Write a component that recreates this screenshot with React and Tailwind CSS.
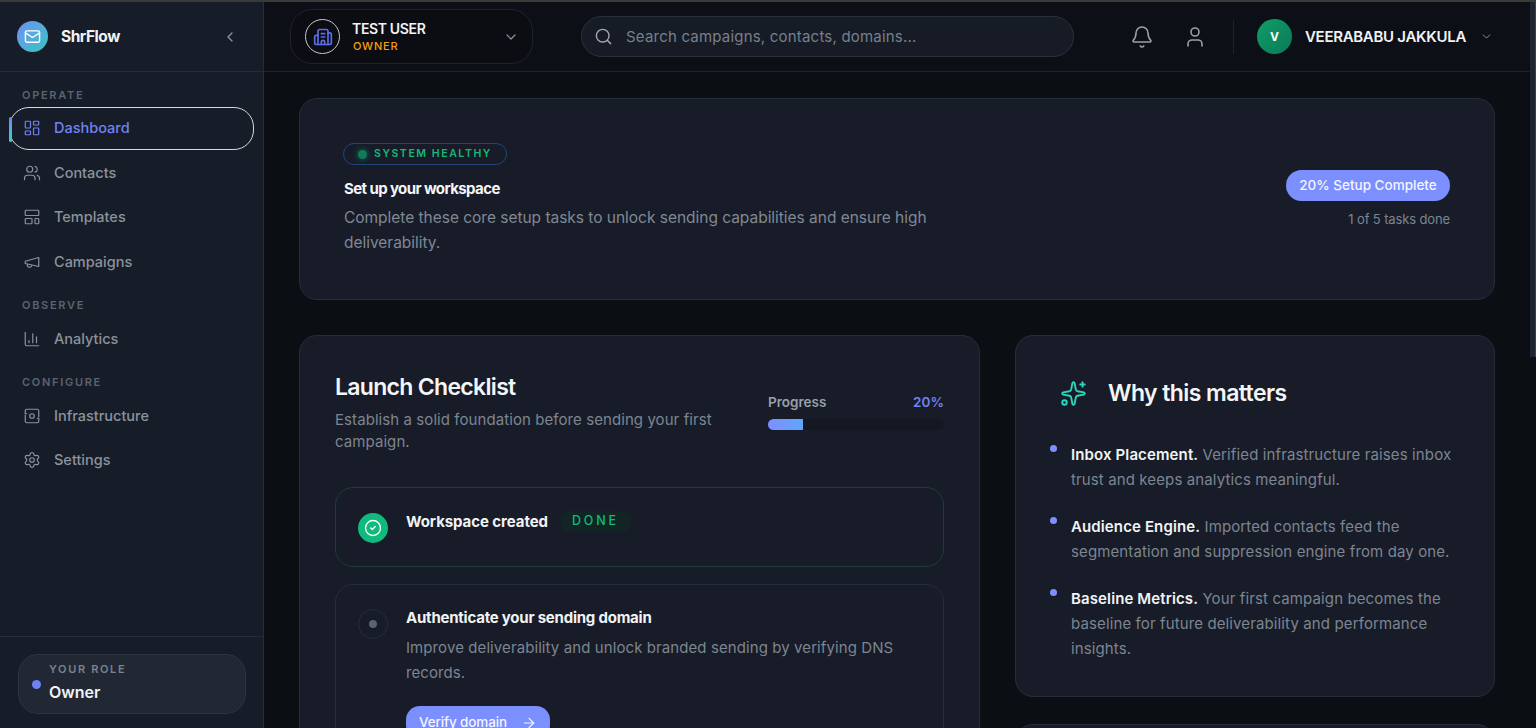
import React from "react";
import { Mail, ChevronLeft, ChevronDown, Building2, Search, Bell, User, LayoutDashboard, Users, LayoutTemplate, ChartColumn, Settings, Sparkles, CircleCheck, ArrowRight } from "lucide-react";

function InfraIcon({ className, strokeWidth = 1.6 }) {
  return (
    <svg viewBox="0 0 24 24" fill="none" stroke="currentColor" strokeWidth={strokeWidth} strokeLinecap="round" strokeLinejoin="round" className={className}>
      <path d="M3 9V5a2 2 0 0 1 2-2h14a2 2 0 0 1 2 2v8" />
      <path d="M21 15v4a2 2 0 0 1-2 2H5a2 2 0 0 1-2-2v-8" />
      <path d="M3 9h2M19 15h2" />
      <circle cx="12" cy="12" r="3" />
    </svg>
  );
}

function HornIcon({ className, strokeWidth = 1.6 }) {
  return (
    <svg viewBox="0 0 24 24" fill="none" stroke="currentColor" strokeWidth={strokeWidth} strokeLinecap="round" strokeLinejoin="round" className={className}>
      <path d="m3 11 18-5v12L3 14v-3z" />
      <path d="M11.6 16.8a3 3 0 1 1-5.8-1.6" />
    </svg>
  );
}

function SectionLabel({ children, className = "" }) {
  return <div className={`pl-[22px] text-[11px] font-semibold tracking-[0.155em] leading-[14px] text-[#5b6370] ${className}`}>{children}</div>;
}

function NavItem({ icon: Icon, label, active }) {
  return (
    <div className={`relative mx-[9px] flex h-[42.5px] items-center gap-[13.5px] rounded-[20px] border pl-[12.5px] text-[14.5px] font-medium ${active ? "border-[#d5d8dc] text-[#7083f0]" : "border-transparent text-[#8b929d]"}`}>
      {active && <span className="absolute left-[-1px] top-[9px] h-[25px] w-[3px] rounded-full bg-gradient-to-b from-[#6c82f5] to-[#2dd4bf]" />}
      <Icon className="h-[18px] w-[18px] shrink-0" strokeWidth={1.6} />
      <span>{label}</span>
    </div>
  );
}

function Sidebar() {
  return (
    <aside className="flex h-full w-[264px] shrink-0 flex-col border-r border-[#262d3a] bg-[#171d28]">
      <div className="flex h-[70px] shrink-0 items-center border-b border-[#262d3a] pl-[17px] pr-[25px]">
        <div className="flex h-[31px] w-[31px] items-center justify-center rounded-full bg-gradient-to-br from-[#6c8cf5] to-[#2dc5c0]">
          <Mail className="h-[17px] w-[17px] text-white" strokeWidth={2} />
        </div>
        <span className="ml-[13px] text-[15.5px] font-bold tracking-[-0.03em] text-[#f1f3f5]">ShrFlow</span>
        <ChevronLeft className="ml-auto h-4 w-4 text-[#8b929d]" strokeWidth={2} />
      </div>
      <nav className="flex-1 pt-[16px]">
        <SectionLabel className="mb-[5px]">OPERATE</SectionLabel>
        <div className="flex flex-col gap-[2px]">
          <NavItem icon={LayoutDashboard} label="Dashboard" active />
          <NavItem icon={Users} label="Contacts" />
          <NavItem icon={LayoutTemplate} label="Templates" />
          <NavItem icon={HornIcon} label="Campaigns" />
        </div>
        <SectionLabel className="mb-[6px] mt-[15px]">OBSERVE</SectionLabel>
        <NavItem icon={ChartColumn} label="Analytics" />
        <SectionLabel className="mb-[6px] mt-[14px]">CONFIGURE</SectionLabel>
        <div className="flex flex-col gap-[2px]">
          <NavItem icon={InfraIcon} label="Infrastructure" />
          <NavItem icon={Settings} label="Settings" />
        </div>
      </nav>
      <div className="shrink-0 border-t border-[#262d3a] px-[18px] pb-[14px] pt-[17px]">
        <div className="flex h-[60px] w-[228px] items-center gap-[8px] rounded-[20px] border border-[#2c3441] bg-[#212834] pl-[13px]">
          <span className="h-[9px] w-[9px] rounded-full bg-[#6c82f5]" />
          <div className="mb-[5px]">
            <div className="text-[11px] font-semibold leading-[16px] tracking-[0.15em] text-[#7a818d]">YOUR ROLE</div>
            <div className="mt-[5px] text-[16px] font-semibold leading-[20px] text-[#f1f3f5]">Owner</div>
          </div>
        </div>
      </div>
    </aside>
  );
}

function Header() {
  return (
    <header className="flex h-[70px] shrink-0 items-center border-b border-[#1c212b] bg-[#0c0f15] pl-[26px]">
      <div className="flex h-[55px] w-[243px] shrink-0 items-center rounded-[22px] border border-[#1e232e] bg-[#0b0d13] pl-[14px]">
        <div className="flex h-[35px] w-[35px] items-center justify-center rounded-full border border-[#c4c8cd]">
          <Building2 className="h-[20px] w-[20px] text-[#5b6ee8]" strokeWidth={2} />
        </div>
        <div className="ml-[12px] mt-[2px]">
          <div className="text-[14px] font-semibold leading-[18px] tracking-[-0.025em] text-[#f1f3f5]">TEST USER</div>
          <div className="ml-px text-[11px] font-medium leading-[17px] tracking-[0.07em] text-[#f59e0b]">OWNER</div>
        </div>
        <ChevronDown className="ml-auto mr-[13px] h-4 w-4 text-[#8b929d]" strokeWidth={1.8} />
      </div>
      <div className="ml-[48px] flex h-[41px] w-[493px] shrink-0 items-center rounded-full border border-[#2a313e] bg-[#161b25] pl-[12px]">
        <Search className="h-[19px] w-[19px] text-[#a1a7b0]" strokeWidth={1.8} />
        <span className="ml-[13px] mt-[2px] text-[15px] tracking-[0.2px] text-[#76808e]">Search campaigns, contacts, domains...</span>
      </div>
      <Bell className="ml-[56px] h-6 w-6 text-[#9aa0a9]" strokeWidth={1.6} />
      <User className="ml-[29px] h-6 w-6 text-[#9aa0a9]" strokeWidth={1.6} />
      <div className="ml-[26px] h-[35px] w-px bg-[#1c212b]" />
      <div className="ml-[23px] flex h-[35px] w-[35px] items-center justify-center rounded-full bg-gradient-to-br from-[#0f9d6a] to-[#0b7a55] text-[12px] font-bold text-white">V</div>
      <span className="ml-[13px] mt-[2px] text-[15px] font-semibold tracking-[-0.02em] text-[#f1f3f5]">VEERABABU JAKKULA</span>
      <ChevronDown className="ml-[14px] h-[13px] w-[13px] text-[#8b929d]" strokeWidth={1.8} />
    </header>
  );
}

function Hero() {
  return (
    <section className="flex h-[202px] items-center justify-between rounded-[18px] border border-[#262d3a] bg-[#171c28] px-[44px]">
      <div className="w-[600px]">
        <div className="-ml-px flex h-[22px] w-[164px] items-center gap-[7px] rounded-full border border-[#21457c] pl-[14px]">
          <span className="h-[9px] w-[9px] rounded-full bg-[#137a57] shadow-[0_0_6px_#137a57]" />
          <span className="text-[10.5px] font-semibold tracking-[0.15em] text-[#17b877]">SYSTEM HEALTHY</span>
        </div>
        <h2 className="mt-[13px] text-[15px] font-bold leading-[22px] tracking-[-0.04em] text-[#f4f5f7]">Set up your workspace</h2>
        <p className="mt-[5px] text-[15.5px] leading-[25px] tracking-[-0.025px] text-[#808894]">Complete these core setup tasks to unlock sending capabilities and ensure high deliverability.</p>
      </div>
      <div className="flex flex-col items-end">
        <div className="flex h-[31px] w-[164px] items-center justify-center rounded-full bg-[#7c8fff] text-[13.5px] font-medium text-[#f4f5ff]">20% Setup Complete</div>
        <div className="mt-[9px] text-[13px] leading-[18px] tracking-[-0.01em] text-[#7d8591]">1 of 5 tasks done</div>
      </div>
    </section>
  );
}

function ChecklistPending({ title, desc, action }) {
  return (
    <div className="flex gap-[18px] rounded-[18px] border border-[#262d3a] px-[22px] py-[24px]">
      <div className="flex h-[30px] w-[30px] shrink-0 items-center justify-center rounded-full border border-[#262d3a]">
        <span className="h-[8px] w-[8px] rounded-full bg-[#5b6370]" />
      </div>
      <div className="-mt-px">
        <div className="text-[15px] font-bold leading-[20px] tracking-[-0.015em] text-[#f1f3f5]">{title}</div>
        <p className="mt-[7px] text-[15px] leading-[25px] tracking-[0.006em] text-[#7d8591]">{desc}</p>
        {action && (
          <div className="mt-[21px] flex h-[33px] w-[144px] items-center justify-between rounded-[14px] bg-[#7c8fff] px-[13px] text-[13.5px] font-medium tracking-[-0.01em] text-[#f4f5ff]">
            {action}
            <ArrowRight className="h-4 w-4" strokeWidth={1.8} />
          </div>
        )}
      </div>
    </div>
  );
}

function Checklist() {
  return (
    <section className="rounded-[18px] border border-[#262d3a] bg-[#171c28] px-[35px] pb-[36px] pt-[35px]">
      <div className="flex justify-between">
        <div className="w-[400px]">
          <h2 className="text-[23px] font-semibold leading-[32px] tracking-[-0.03em] text-[#f4f5f7]">Launch Checklist</h2>
          <p className="mt-[6px] text-[15px] leading-[22px] tracking-[0.005em] text-[#7d8591]">Establish a solid foundation before sending your first campaign.</p>
        </div>
        <div className="mt-[22px] w-[176px]">
          <div className="flex justify-between text-[13.5px] font-semibold leading-[18px]">
            <span className="text-[#9aa0a9]">Progress</span>
            <span className="text-[#7083f0]">20%</span>
          </div>
          <div className="mt-[8px] h-[11px] rounded-full bg-[#141822]">
            <div className="h-full w-1/5 rounded-l-full bg-gradient-to-r from-[#7c8fff] to-[#60a5fa]" />
          </div>
        </div>
      </div>
      <div className="mt-[34px] flex flex-col gap-[17px]">
        <div className="flex h-[80px] gap-[18px] rounded-[18px] border border-[#1a3f38] pl-[22px] pt-[25px]">
          <div className="flex h-[30px] w-[30px] shrink-0 items-center justify-center rounded-full bg-[#10b97c]">
            <CircleCheck className="h-[18px] w-[18px] text-white" strokeWidth={1.8} />
          </div>
          <div className="-mt-[2px] flex h-[21px] items-center gap-[12px]">
            <span className="mt-[2px] text-[15px] font-bold tracking-[-0.005em] text-[#f1f3f5]">Workspace created</span>
            <span className="flex h-[21px] w-[71px] items-center justify-center rounded-full bg-[#122524] text-[12.5px] font-medium tracking-[0.22em] text-[#10b97c]">DONE</span>
          </div>
        </div>
        <ChecklistPending title="Authenticate your sending domain" desc="Improve deliverability and unlock branded sending by verifying DNS records." action="Verify domain" />
      </div>
    </section>
  );
}

function Why() {
  const items = [
    ["Inbox Placement.", "Verified infrastructure raises inbox trust and keeps analytics meaningful."],
    ["Audience Engine.", "Imported contacts feed the segmentation and suppression engine from day one."],
    ["Baseline Metrics.", "Your first campaign becomes the baseline for future deliverability and performance insights."],
  ];
  return (
    <section className="h-[362px] rounded-[18px] border border-[#262d3a] bg-[#171c28] pl-[34px] pr-[36px] pt-[43px]">
      <div className="flex items-center gap-[21px] pl-[10px]">
        <Sparkles className="h-[27px] w-[27px] text-[#2dd4bf]" strokeWidth={1.7} />
        <h2 className="text-[23px] font-semibold leading-[28px] tracking-[-0.025em] text-[#f4f5f7]">Why this matters</h2>
      </div>
      <ul className="mt-[35px] flex flex-col gap-[22px]">
        {items.map(([b, t]) => (
          <li key={b} className="flex gap-[14px]">
            <span className="mt-[3px] h-[7px] w-[7px] shrink-0 rounded-full bg-[#7c8fff]" />
            <p className="text-[15px] leading-[25px] tracking-[0.008em] text-[#7d8591]"><strong className="font-semibold text-[#f1f3f5]">{b}</strong> {t}</p>
          </li>
        ))}
      </ul>
    </section>
  );
}

export default function App() {
  return (
    <div className="flex h-screen flex-col overflow-hidden bg-[#0b0f14] font-['Inter',sans-serif]">
      <div className="h-[2px] shrink-0 bg-[#3a3a38]" />
      <div className="flex min-h-0 flex-1">
        <Sidebar />
        <div className="min-w-0 flex-1 overflow-hidden">
          <Header />
          <main className="px-[35px] pb-[36px] pt-[26px]">
            <Hero />
            <div className="mt-[35px] grid grid-cols-[681px_1fr] items-start gap-[35px]">
              <Checklist />
              <div className="flex flex-col gap-[27px]">
                <Why />
                <section className="h-[300px] rounded-[18px] border border-[#262d3a] bg-[#171c28]" />
              </div>
            </div>
          </main>
        </div>
        <div className="w-[6px] shrink-0">
          <div className="h-[355px] border-r border-[#3a404c] bg-[#1f2530]" />
        </div>
      </div>
    </div>
  );
}
